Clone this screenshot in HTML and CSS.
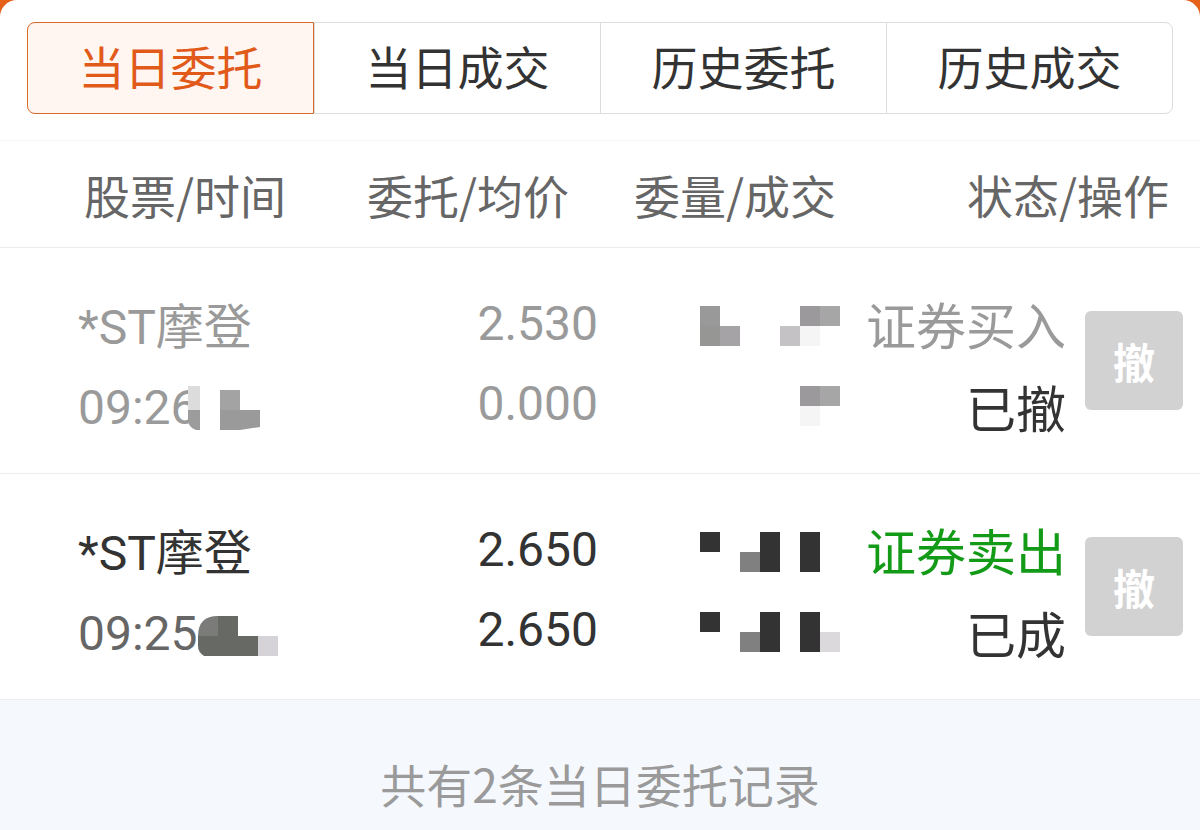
FILE: index.html
```html
<!DOCTYPE html>
<html lang="zh-CN">
<head>
<meta charset="utf-8">
<title>当日委托</title>
<link rel="stylesheet" href="styles.css">
</head>
<body>
<div class="card">
  <div class="tabs">
    <div class="tab active">当日委托</div>
    <div class="tab">当日成交</div>
    <div class="tab">历史委托</div>
    <div class="tab">历史成交</div>
  </div>

  <div class="thead">
    <div class="th">股票/时间</div>
    <div class="th">委托/均价</div>
    <div class="th">委量/成交</div>
    <div class="th">状态/操作</div>
  </div>

  <div class="row muted">
    <div class="cell c-name">
      <div class="line">*ST摩登</div>
      <div class="line time">09:26<svg class="mask shift" width="80" height="40" viewBox="0 0 80 40"><rect x="8" y="-4" width="12" height="24" fill="#dcdcdc"/><path d="M8 20 H20 V40 H16 Q10 38 8 32 Z" fill="#9c9c9c"/><rect x="40" y="0" width="20" height="20" fill="#a3a3a3"/><path d="M40 20 H80 V37 L60 40 H40 Z" fill="#9a9a9a"/></svg></div>
    </div>
    <div class="cell c-price">
      <div class="line">2.530</div>
      <div class="line">0.000</div>
    </div>
    <div class="cell c-vol">
      <div class="line"><svg class="mask vol" width="140" height="40" viewBox="0 0 140 40"><rect x="0" y="0" width="20" height="20" fill="#999999"/><rect x="0" y="20" width="20" height="20" fill="#969795"/><rect x="20" y="20" width="20" height="20" fill="#a5a3a6"/><rect x="80" y="20" width="20" height="20" fill="#c4c2c5"/><rect x="100" y="0" width="20" height="20" fill="#9b999c"/><rect x="120" y="0" width="20" height="20" fill="#a6a6a6"/><rect x="100" y="20" width="20" height="20" fill="#f5f5f5"/></svg></div>
      <div class="line"><svg class="mask vol" width="140" height="40" viewBox="0 0 140 40"><rect x="100" y="0" width="20" height="20" fill="#9b999c"/><rect x="120" y="0" width="20" height="20" fill="#a6a6a6"/><rect x="100" y="20" width="20" height="20" fill="#f5f5f5"/></svg></div>
    </div>
    <div class="cell c-status">
      <div class="line">证券买入</div>
      <div class="line dark">已撤</div>
    </div>
    <div class="cell c-op">
      <button class="btn" type="button">撤</button>
    </div>
  </div>

  <div class="row">
    <div class="cell c-name">
      <div class="line">*ST摩登</div>
      <div class="line time">09:25<svg class="mask" width="80" height="40" viewBox="0 0 80 40"><path d="M0 20 Q0 0 20 0 V20 Z" fill="#7b7c7a"/><rect x="20" y="0" width="20" height="20" fill="#676965"/><path d="M0 20 H60 V40 H6 Q0 36 0 30 Z" fill="#676965"/><rect x="60" y="20" width="20" height="20" fill="#d5d3d7"/></svg></div>
    </div>
    <div class="cell c-price">
      <div class="line">2.650</div>
      <div class="line">2.650</div>
    </div>
    <div class="cell c-vol">
      <div class="line"><svg class="mask vol" width="140" height="40" viewBox="0 0 140 40"><rect x="0" y="0" width="20" height="20" fill="#333333"/><rect x="40" y="20" width="20" height="20" fill="#808080"/><rect x="60" y="0" width="20" height="40" fill="#333333"/><rect x="100" y="0" width="20" height="40" fill="#333333"/></svg></div>
      <div class="line"><svg class="mask vol" width="140" height="40" viewBox="0 0 140 40"><rect x="0" y="0" width="20" height="20" fill="#333333"/><rect x="40" y="20" width="20" height="20" fill="#808080"/><rect x="60" y="0" width="20" height="40" fill="#333333"/><rect x="100" y="0" width="20" height="40" fill="#333333"/><rect x="120" y="20" width="20" height="20" fill="#dcd9dd"/></svg></div>
    </div>
    <div class="cell c-status">
      <div class="line sell">证券卖出</div>
      <div class="line dark">已成</div>
    </div>
    <div class="cell c-op">
      <button class="btn" type="button">撤</button>
    </div>
  </div>

  <div class="footer">共有2条当日委托记录</div>
</div>
</body>
</html>
```

FILE: styles.css
```css
html, body {
  margin: 0;
  padding: 0;
}

body {
  background: #e5611a;
  width: 1200px;
  height: 830px;
  overflow: hidden;
  font-family: "Noto Sans CJK SC", "Noto Sans", sans-serif;
}

.card {
  background: #ffffff;
  border-radius: 17px 17px 0 0;
  height: 830px;
  padding-top: 22px;
  box-sizing: border-box;
  overflow: hidden;
  display: flex;
  flex-direction: column;
}

/* Tabs */
.tabs {
  margin: 0 27px;
  height: 92px;
  box-sizing: border-box;
  border: 1px solid #dcdcdc;
  border-radius: 8px;
  display: grid;
  grid-template-columns: repeat(4, 1fr);
}

.tab {
  display: flex;
  align-items: center;
  justify-content: center;
  padding-bottom: 7px;
  font-size: 46px;
  color: #333333;
  border-left: 1px solid #dcdcdc;
}

.tab:first-child {
  border-left: none;
}

.tab.active {
  margin: -1px 0 -1px -1px;
  border: 1px solid #d96b28;
  border-radius: 8px 0 0 8px;
  background: #fff6f2;
  color: #e15a1a;
}

/* Header */
.thead {
  margin-top: 26px;
  height: 108px;
  box-sizing: border-box;
  border-top: 1px solid #f4f4f4;
  border-bottom: 1px solid #ececec;
  padding: 0 0 0 84px;
  display: grid;
  grid-template-columns: 283px 267px 333px 1fr;
  align-items: center;
}

.th {
  font-size: 46px;
  color: #666666;
  white-space: nowrap;
}

/* Rows */
.row {
  display: grid;
  grid-template-columns: 300px 220px 242px 226px 117px;
  padding: 35px 17px 30px 78px;
  height: 226px;
  box-sizing: border-box;
  border-bottom: 1px solid #ececec;
  font-family: Roboto, "Noto Sans CJK SC", sans-serif;
  font-size: 48px;
  color: #333333;
}

.row:last-of-type {
  border-bottom: none;
  height: 225px;
}

.row.muted {
  color: #9a9a9a;
}

.line {
  height: 80px;
  display: flex;
  align-items: center;
  white-space: nowrap;
}

.time {
  color: #666666;
}

.row.muted .time {
  color: #9a9a9a;
}

.c-price .line,
.c-vol .line,
.c-status .line {
  justify-content: flex-end;
}

.c-name .line:first-child {
  padding-bottom: 4px;
}

.mask {
  display: block;
  flex: none;
  margin-top: 6px;
  overflow: visible;
}

/* redaction block laid over the last digit of the time */
.mask.shift {
  margin-left: -18px;
}

.c-status .line {
  font-size: 50px;
  padding-bottom: 3px;
}

.row.muted .c-status .line.dark,
.c-status .line.dark {
  color: #333333;
}

.c-status .line.sell {
  color: #139a17;
}

.c-op {
  display: flex;
  justify-content: flex-end;
  align-items: flex-start;
}

.btn {
  margin-top: 28px;
  width: 98px;
  height: 99px;
  border: none;
  border-radius: 6px;
  background: #d2d2d2;
  color: #ffffff;
  font-family: "Noto Sans CJK SC", sans-serif;
  font-size: 42px;
  font-weight: 700;
  padding: 0;
  display: flex;
  align-items: center;
  justify-content: center;
}

/* Footer */
.footer {
  flex: 1;
  background: #f5f8fd;
  padding-top: 43px;
  line-height: 80px;
  text-align: center;
  font-size: 46px;
  color: #9a9a9a;
}
```
